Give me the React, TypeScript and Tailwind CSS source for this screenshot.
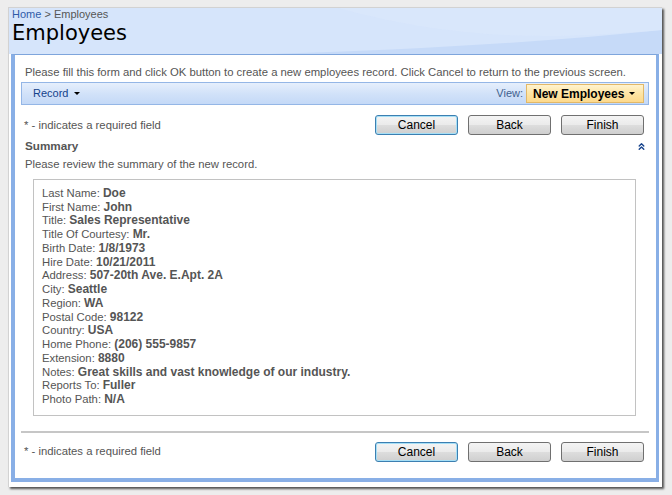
import React from 'react';
import { ChevronsUp } from 'lucide-react';

const FIELDS: [string, string][] = [
  ['Last Name', 'Doe'],
  ['First Name', 'John'],
  ['Title', 'Sales Representative'],
  ['Title Of Courtesy', 'Mr.'],
  ['Birth Date', '1/8/1973'],
  ['Hire Date', '10/21/2011'],
  ['Address', '507-20th Ave. E.Apt. 2A'],
  ['City', 'Seattle'],
  ['Region', 'WA'],
  ['Postal Code', '98122'],
  ['Country', 'USA'],
  ['Home Phone', '(206) 555-9857'],
  ['Extension', '8880'],
  ['Notes', 'Great skills and vast knowledge of our industry.'],
  ['Reports To', 'Fuller'],
  ['Photo Path', 'N/A'],
];

const Button = ({ label, focused }: { label: string; focused?: boolean }) => (
  <button
    className={`w-[83px] h-[20px] rounded-[3px] border text-[12px] leading-none text-black bg-[linear-gradient(#f4f4f4,#ebebeb_48%,#dddddd_52%,#cfcfcf)] ${
      focused ? 'border-[#3c7fb1] shadow-[inset_0_0_0_1px_#a6dff6]' : 'border-[#707070]'
    }`}
  >
    {label}
  </button>
);

const ActionRow = () => (
  <div className="flex items-center justify-between h-[20px] pl-[9px] pr-[12px]">
    <span className="text-[#555]">* - indicates a required field</span>
    <div className="flex gap-[10px]">
      <Button label="Cancel" focused />
      <Button label="Back" />
      <Button label="Finish" />
    </div>
  </div>
);

export default function App() {
  return (
    <div className="w-[672px] h-[495px] bg-[#ededed] pt-[7px] pl-[8px] font-['Liberation_Sans',Arial,sans-serif] text-[11.3px]">
      <div className="w-[654px] h-[480px] bg-white border-l border-t border-[#d2d2d2] shadow-[2px_2px_2px_rgba(0,0,0,0.65)]">
        {/* header */}
        <div className="relative h-[46px] bg-[#d6e5fb] pl-[3px]">
          <svg className="absolute inset-0 w-full h-full" viewBox="0 0 654 46" preserveAspectRatio="none">
            <path d="M260 46 C 400 42, 540 34, 654 22 L654 46 Z" fill="#c6daf8" />
            <path d="M330 0 L654 0 L654 22 C 560 30, 460 36, 330 0 Z" fill="#dbe8fb" opacity="0.6" />
          </svg>
          <div className="relative leading-[13px] h-[13px] text-[11px]">
            <span className="text-[#2f5ba8]">Home</span>
            <span className="text-[#555]"> &gt; Employees</span>
          </div>
          <div className="relative font-['DejaVu_Sans',sans-serif] text-[21px] leading-[24px] text-black">Employees</div>
        </div>

        {/* panel */}
        <div className="ml-[2px] w-[648px] border-l-4 border-r-[3px] border-b-4 border-t border-l-[#89afe6] border-r-[#89afe6] border-b-[#89afe6] border-t-[#7ea5dc] pb-[16px]">
          <div className="pt-[10px] pb-[3px] pl-[10px] leading-[14px] text-[#555]">
            Please fill this form and click OK button to create a new employees record. Click Cancel to return to the previous screen.
          </div>

          <div className="ml-[6px] mr-[7px] h-[23px] border border-[#94b6e6] bg-[linear-gradient(#e6effc,#d2e2f9_50%,#c4d9f7)] flex items-center justify-between pl-[11px] pr-[4px]">
            <div className="flex items-center gap-[6px] text-[11px] text-[#15428b]">
              Record
              <span className="w-0 h-0 border-l-[3px] border-r-[3px] border-t-[3px] border-l-transparent border-r-transparent border-t-black" />
            </div>
            <div className="flex items-center gap-[3px]">
              <span className="text-[11px] text-[#3e5f8e]">View:</span>
              <div className="w-[118px] h-[19px] border border-[#e2b868] bg-[linear-gradient(#fff3cf,#fee5a4_50%,#fdd98c)] flex items-center justify-between pl-[6px] pr-[8px]">
                <span className="text-[12px] font-bold text-black">New Employees</span>
                <span className="w-0 h-0 border-l-[3px] border-r-[3px] border-t-[3px] border-l-transparent border-r-transparent border-t-black" />
              </div>
            </div>
          </div>

          <div className="mt-[10px]">
            <ActionRow />
          </div>

          <div className="mt-[4px] flex items-center justify-between pl-[10px] pr-[9px] leading-[14px]">
            <span className="font-bold text-[11.7px] text-[#555]">Summary</span>
            <ChevronsUp size={11} strokeWidth={3} className="text-[#15428b]" />
          </div>
          <div className="mt-[4px] pl-[10px] leading-[14px] text-[#555]">Please review the summary of the new record.</div>

          <div className="mt-[8px] ml-[18px] mr-[20px] border border-[#c2c2c2] pt-[7px] pb-[8px] pl-[8px] leading-[13.73px] text-[#555]">
            {FIELDS.map(([k, v]) => (
              <div key={k}>
                {k}: <span className="font-bold text-[12px]">{v}</span>
              </div>
            ))}
          </div>

          <div className="mt-[15px] ml-[6px] mr-[7px] h-[2px] bg-[#c6c6c6]" />

          <div className="mt-[9px]">
            <ActionRow />
          </div>
        </div>
      </div>
    </div>
  );
}
